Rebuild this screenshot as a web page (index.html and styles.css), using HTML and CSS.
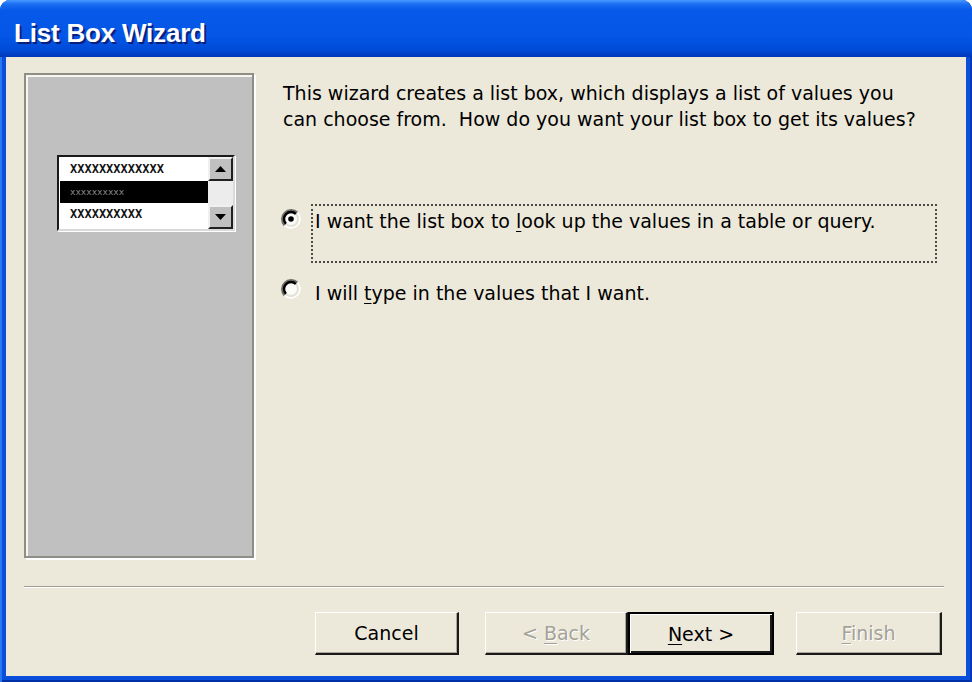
FILE: index.html
```
<!DOCTYPE html>
<html lang="en">
<head>
    <meta charset="UTF-8">
    <meta name="viewport" content="width=device-width, initial-scale=1.0">
    <title>List Box Wizard</title>
    <link rel="stylesheet" href="styles.css">
</head>
<body>
    <div class="window">
        <div class="titlebar">
            <span class="title">List Box Wizard</span>
        </div>
        <div class="client">
            <div class="main">
                <div class="picture">
                    <div class="listbox">
                        <div class="rows">
                            <div class="row">XXXXXXXXXXXXX</div>
                            <div class="row sel">xxxxxxxxxx</div>
                            <div class="row">XXXXXXXXXX</div>
                        </div>
                        <div class="scrollbar">
                            <div class="sbtn">
                                <svg width="11" height="6" viewBox="0 0 11 6"><path d="M0 6 L5.5 0 L11 6 Z" fill="#000"/></svg>
                            </div>
                            <div class="track"></div>
                            <div class="sbtn">
                                <svg width="11" height="6" viewBox="0 0 11 6"><path d="M0 0 L5.5 6 L11 0 Z" fill="#000"/></svg>
                            </div>
                        </div>
                    </div>
                </div>
                <div class="content">
                    <p class="intro">This wizard creates a list box, which displays a list of values you<br>can choose from.&nbsp; How do you want your list box to get its values?</p>
                    <div class="option first">
                        <svg class="radio" width="20" height="20" viewBox="0 0 20 20">
                            <circle cx="10" cy="10" r="8" fill="#fbfbf8"/>
                            <path d="M3.64 16.36 A9 9 0 0 1 16.36 3.64" fill="none" stroke="#6e6d68" stroke-width="2.4"/>
                            <path d="M3.64 16.36 A9 9 0 0 0 16.36 3.64" fill="none" stroke="#fff" stroke-width="2"/>
                            <path d="M5.05 14.95 A7 7 0 0 1 14.95 5.05" fill="none" stroke="#000" stroke-width="2.4"/>
                            <path d="M5.05 14.95 A7 7 0 0 0 14.95 5.05" fill="none" stroke="#e4e1d6" stroke-width="2"/>
                            <circle cx="10" cy="10" r="2.8" fill="#000"/>
                        </svg>
                        <div class="label focus">I want the list box to <u>l</u>ook up the values in a table or query.</div>
                    </div>
                    <div class="option second">
                        <svg class="radio" width="20" height="20" viewBox="0 0 20 20">
                            <circle cx="10" cy="10" r="8" fill="#fbfbf8"/>
                            <path d="M3.64 16.36 A9 9 0 0 1 16.36 3.64" fill="none" stroke="#6e6d68" stroke-width="2.4"/>
                            <path d="M3.64 16.36 A9 9 0 0 0 16.36 3.64" fill="none" stroke="#fff" stroke-width="2"/>
                            <path d="M5.05 14.95 A7 7 0 0 1 14.95 5.05" fill="none" stroke="#000" stroke-width="2.4"/>
                            <path d="M5.05 14.95 A7 7 0 0 0 14.95 5.05" fill="none" stroke="#e4e1d6" stroke-width="2"/>
                        </svg>
                        <div class="label">I will <u>t</u>ype in the values that I want.</div>
                    </div>
                </div>
            </div>
            <div class="separator"></div>
            <div class="buttons">
                <button class="btn cancel">Cancel</button>
                <button class="btn back" disabled>&lt; <u>B</u>ack</button>
                <button class="btn next"><u>N</u>ext &gt;</button>
                <button class="btn finish" disabled><u>F</u>inish</button>
            </div>
        </div>
    </div>
</body>
</html>
```
FILE: styles.css
```
html, body {
    margin: 0;
    padding: 0;
    background: #ffffff;
}
.window {
    width: 972px;
    height: 682px;
    box-sizing: border-box;
    display: flex;
    flex-direction: column;
    background: #0a4fdc;
    border-radius: 10px 10px 0 0;
    padding: 0 6px 6px 6px;
    box-shadow: inset 2px 0 0 #2a78f0, inset -2px 0 0 #0838b8, inset 0 -2px 0 #0030a8;
    font-family: "DejaVu Sans", sans-serif;
    color: #000;
}
.titlebar {
    height: 57px;
    margin: 0 -6px;
    padding-left: 14px;
    display: flex;
    align-items: center;
    border-radius: 10px 10px 0 0;
    background: linear-gradient(#4a9bff 0, #1a6ff2 4px, #075ae9 10px, #0456e6 36px, #004bd8 50px, #0038b6 57px);
}
.title {
    font-family: "Liberation Sans", Arial, sans-serif;
    font-weight: bold;
    font-size: 26px;
    letter-spacing: -0.2px;
    color: #fff;
    text-shadow: 2px 2px 0 #0a1f7a;
    margin-top: 10px;
}
.client {
    flex: 1;
    background: #ece9da;
    padding: 16px 22px 21px 18px;
    display: flex;
    flex-direction: column;
}
.main {
    height: 485px;
    display: flex;
}
.picture {
    width: 230px;
    box-sizing: border-box;
    height: 485px;
    background: #c0c0c0;
    border: 2px solid #8e8d86;
    box-shadow: inset 2px 2px 0 #f7f6f0, 2px 2px 0 #ffffff;
    padding: 80px 0 0 31px;
}
.listbox {
    width: 178px;
    height: 76px;
    box-sizing: border-box;
    display: flex;
    background: #fff;
    border: 2px solid #1a1a1a;
    border-right-color: #dadada;
    border-bottom-color: #dadada;
    box-shadow: 1px 1px 0 #fff;
}
.rows {
    flex: 1;
    padding: 1px 0 0 1px;
}
.row {
    height: 23px;
    padding-left: 10px;
    font-family: "DejaVu Sans Mono", monospace;
    font-weight: bold;
    font-size: 12px;
    line-height: 23px;
    color: #111;
}
.row.sel {
    height: 22px;
    line-height: 22px;
    background: #000;
    color: #8c8c8c;
    font-size: 9px;
    font-weight: normal;
}
.scrollbar {
    width: 25px;
    display: flex;
    flex-direction: column;
}
.sbtn {
    height: 24px;
    box-sizing: border-box;
    background: #c0c0c0;
    border: 2px solid #202020;
    border-top-color: #f0f0f0;
    border-left-color: #f0f0f0;
    display: flex;
    align-items: center;
    justify-content: center;
}
.track {
    flex: 1;
    background: #ececec;
}
.content {
    margin-left: 29px;
    padding-top: 7px;
    flex: 1;
}
.intro {
    margin: 0;
    font-size: 19px;
    line-height: 26px;
}
.option {
    display: flex;
    align-items: flex-start;
}
.option.first {
    margin-top: 72px;
}
.option.second {
    margin-top: 13px;
}
.radio {
    width: 20px;
    height: 20px;
    margin: 5px 10px 0 -2px;
    flex: none;
}
.option.second .radio {
    margin-top: 3px;
}
.label {
    width: 626px;
    box-sizing: border-box;
    border: 2px solid transparent;
    padding: 2px 0 0 2px;
    font-size: 19px;
    line-height: 27px;
}
.label.focus {
    height: 59px;
    border: 2px dotted #4a4a46;
}
.label u, .btn u {
    text-decoration-thickness: 1px;
    text-underline-offset: 3px;
}
.separator {
    margin-top: 28px;
    height: 1px;
    background: #a09e92;
    border-bottom: 1px solid #fff;
}
.buttons {
    margin-top: 24px;
    padding-right: 2px;
    display: flex;
    justify-content: flex-end;
}
.btn {
    height: 43px;
    box-sizing: border-box;
    background: #ece9da;
    border: 1px solid #fff;
    border-right: 2px solid #1a1a1a;
    border-bottom: 2px solid #1a1a1a;
    box-shadow: inset -1px -1px 0 #aca899;
    font-family: "DejaVu Sans", sans-serif;
    font-size: 19px;
    color: #000;
    padding: 0;
}
.cancel {
    width: 144px;
}
.back {
    width: 143px;
    margin-left: 26px;
}
.next {
    width: 146px;
    border: 2px solid #000;
    box-shadow: inset 1px 1px 0 #fff, inset -2px -2px 0 #1a1a1a;
}
.finish {
    width: 146px;
    margin-left: 22px;
}
.btn:disabled {
    color: #a3a198;
    text-shadow: 1px 1px 0 #fff;
}
```
